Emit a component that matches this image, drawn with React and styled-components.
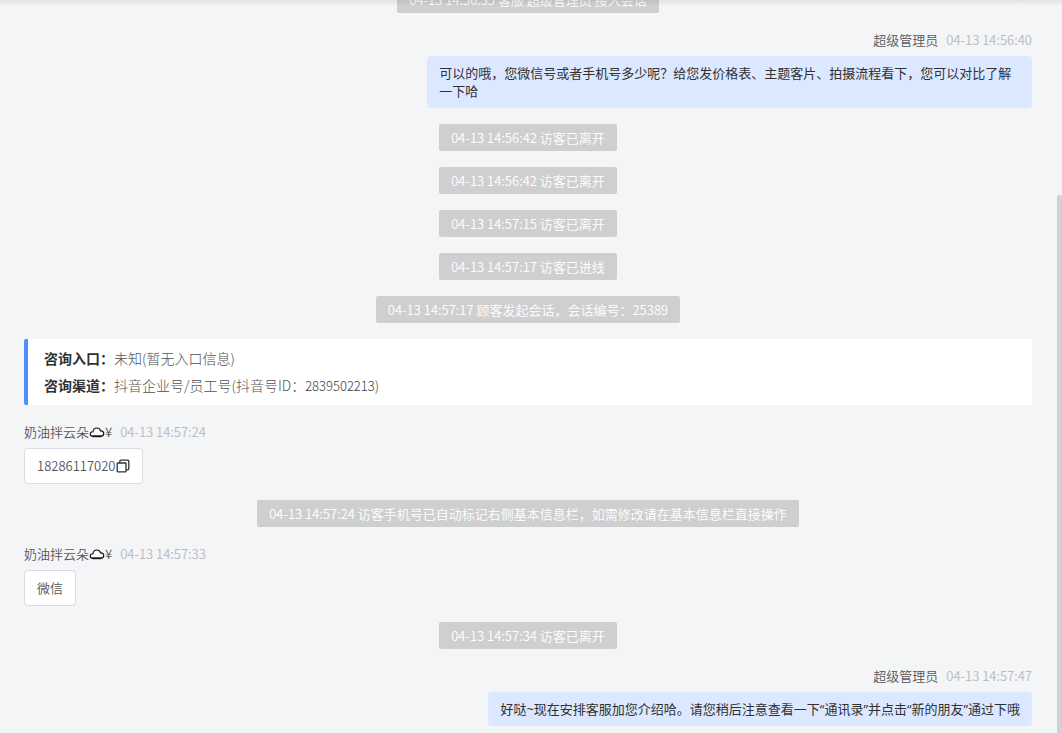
import React from 'react';
import styled, {createGlobalStyle} from 'styled-components';

const GlobalStyle = createGlobalStyle`
    * {
        box-sizing: border-box;
    }
    body {
        margin: 0;
        background-color: #f3f5f7;
        font-family: "Noto Sans CJK SC", sans-serif;
        font-size: 13px;
        font-weight: 350;
    }
`;

const Window = styled.main`
    position: relative;
    display: flex;
    flex-direction: column;
    justify-content: flex-end;
    height: 100vh;
    overflow: hidden;
`;

const TopShadow = styled.div`
    position: absolute;
    top: 0;
    left: 0;
    right: 0;
    height: 6px;
    background: linear-gradient(rgba(0, 0, 0, 0.08), rgba(0, 0, 0, 0));
`;

const Scrollbar = styled.div`
    position: absolute;
    top: 195px;
    right: 0;
    bottom: 0;
    width: 5px;
    border-radius: 3px 3px 0 0;
    background-color: #d0d1d3;
`;

const List = styled.div`
    display: flex;
    flex-direction: column;
    gap: 16px;
    padding: 0 30px 7px 24px;
`;

const Notice = styled.div`
    align-self: center;
    padding: 0 12px;
    border-radius: 2px;
    background-color: #cfcfcf;
    color: #fff;
    line-height: 27px;
    white-space: nowrap;
`;

const Row = styled.article`
    display: flex;
    flex-direction: column;
    align-items: ${props => props.$own ? 'flex-end' : 'flex-start'};
`;

const Meta = styled.header`
    display: flex;
    gap: 8px;
    margin-bottom: 5px;
    line-height: 22px;
`;

const Name = styled.span`
    display: flex;
    align-items: center;
    color: #55575b;
`;

const Time = styled.time`
    color: #b8babe;
`;

const OwnBubble = styled.div`
    max-width: 60%;
    padding: 8px 12px;
    border-radius: 4px;
    background-color: #dce8ff;
    color: #303133;
    font-family: "Open Sans", "Noto Sans CJK SC", sans-serif;
    font-weight: 400;
    line-height: 18px;
`;

const Bubble = styled.div`
    display: flex;
    align-items: center;
    padding: 8px 12px;
    border: 1px solid #d9dce0;
    border-radius: 4px;
    background-color: #fff;
    color: #55575b;
    line-height: 18px;
`;

const CopyButton = styled.button`
    display: flex;
    padding: 0;
    border: 0;
    background: none;
    color: #303133;
    cursor: pointer;
`;

const Source = styled.section`
    padding: 6px 16px;
    border-left: 4px solid #4f8df9;
    border-radius: 2px 0 0 2px;
    background-color: #fff;
    color: #505256;
    font-size: 14px;
    font-weight: 300;
    line-height: 27px;
    p {
        margin: 0;
    }
    strong {
        color: #303133;
        font-weight: 700;
    }
`;

const Account = styled.span`
    color: #404246;
    font-size: 13px;
`;

const CloudIcon = () => (
    <svg width="16" height="12" viewBox="0 0 16 12" fill="none" stroke="#111">
        <path
            fill="#fff"
            strokeWidth="1.2"
            d="M4 10.2C2.2 10.2 1.3 9.2 1.3 7.9C1.3 6.5 2.5 5.6 3.9 5.8C4.3 3.4 5.9 2 7.9 2C9.7 2 11 3.1 11.5 4.8C13.4 4.6 14.7 5.8 14.7 7.5C14.7 9.2 13.6 10.2 11.9 10.2Z" />
        <path strokeWidth="1.6" d="M3.5 10.4H12.5" />
    </svg>
);

const CopyIcon = () => (
    <svg width="14" height="14" viewBox="0 0 14 14" fill="none" stroke="currentColor" strokeWidth="1.3">
        <rect x="1.2" y="4" width="8.8" height="8.8" rx="0.6" />
        <path d="M3.8 4V2.2a1 1 0 0 1 1-1H11.8a1 1 0 0 1 1 1V9.8a1 1 0 0 1-1 1H10" />
    </svg>
);

const AdminMessage = ({time, children}) => (
    <Row $own>
        <Meta>
            <Name>超级管理员</Name>
            <Time>{time}</Time>
        </Meta>
        <OwnBubble>{children}</OwnBubble>
    </Row>
);

const VisitorMessage = ({time, children}) => (
    <Row>
        <Meta>
            <Name>奶油拌云朵<CloudIcon />¥</Name>
            <Time>{time}</Time>
        </Meta>
        <Bubble>{children}</Bubble>
    </Row>
);

const App = () => (
    <>
        <GlobalStyle />
        <Window>
            <List>
                <Notice>04-13 14:56:35 客服 超级管理员 接入会话</Notice>
                <AdminMessage time="04-13 14:56:40">
                    可以的哦，您微信号或者手机号多少呢？给您发价格表、主题客片、拍摄流程看下，您可以对比了解一下哈
                </AdminMessage>
                <Notice>04-13 14:56:42 访客已离开</Notice>
                <Notice>04-13 14:56:42 访客已离开</Notice>
                <Notice>04-13 14:57:15 访客已离开</Notice>
                <Notice>04-13 14:57:17 访客已进线</Notice>
                <Notice>04-13 14:57:17 顾客发起会话，会话编号：25389</Notice>
                <Source>
                    <p><strong>咨询入口：</strong>未知(暂无入口信息)</p>
                    <p>
                        <strong>咨询渠道：</strong>抖音企业号/员工号(抖音号ID：
                        <Account>2839502213</Account>)
                    </p>
                </Source>
                <VisitorMessage time="04-13 14:57:24">
                    18286117020
                    <CopyButton type="button" aria-label="复制">
                        <CopyIcon />
                    </CopyButton>
                </VisitorMessage>
                <Notice>
                    04-13 14:57:24 访客手机号已自动标记右侧基本信息栏，如需修改请在基本信息栏直接操作
                </Notice>
                <VisitorMessage time="04-13 14:57:33">微信</VisitorMessage>
                <Notice>04-13 14:57:34 访客已离开</Notice>
                <AdminMessage time="04-13 14:57:47">
                    好哒~现在安排客服加您介绍哈。请您稍后注意查看一下“通讯录”并点击“新的朋友”通过下哦
                </AdminMessage>
            </List>
            <TopShadow />
            <Scrollbar />
        </Window>
    </>
);

export default App;
